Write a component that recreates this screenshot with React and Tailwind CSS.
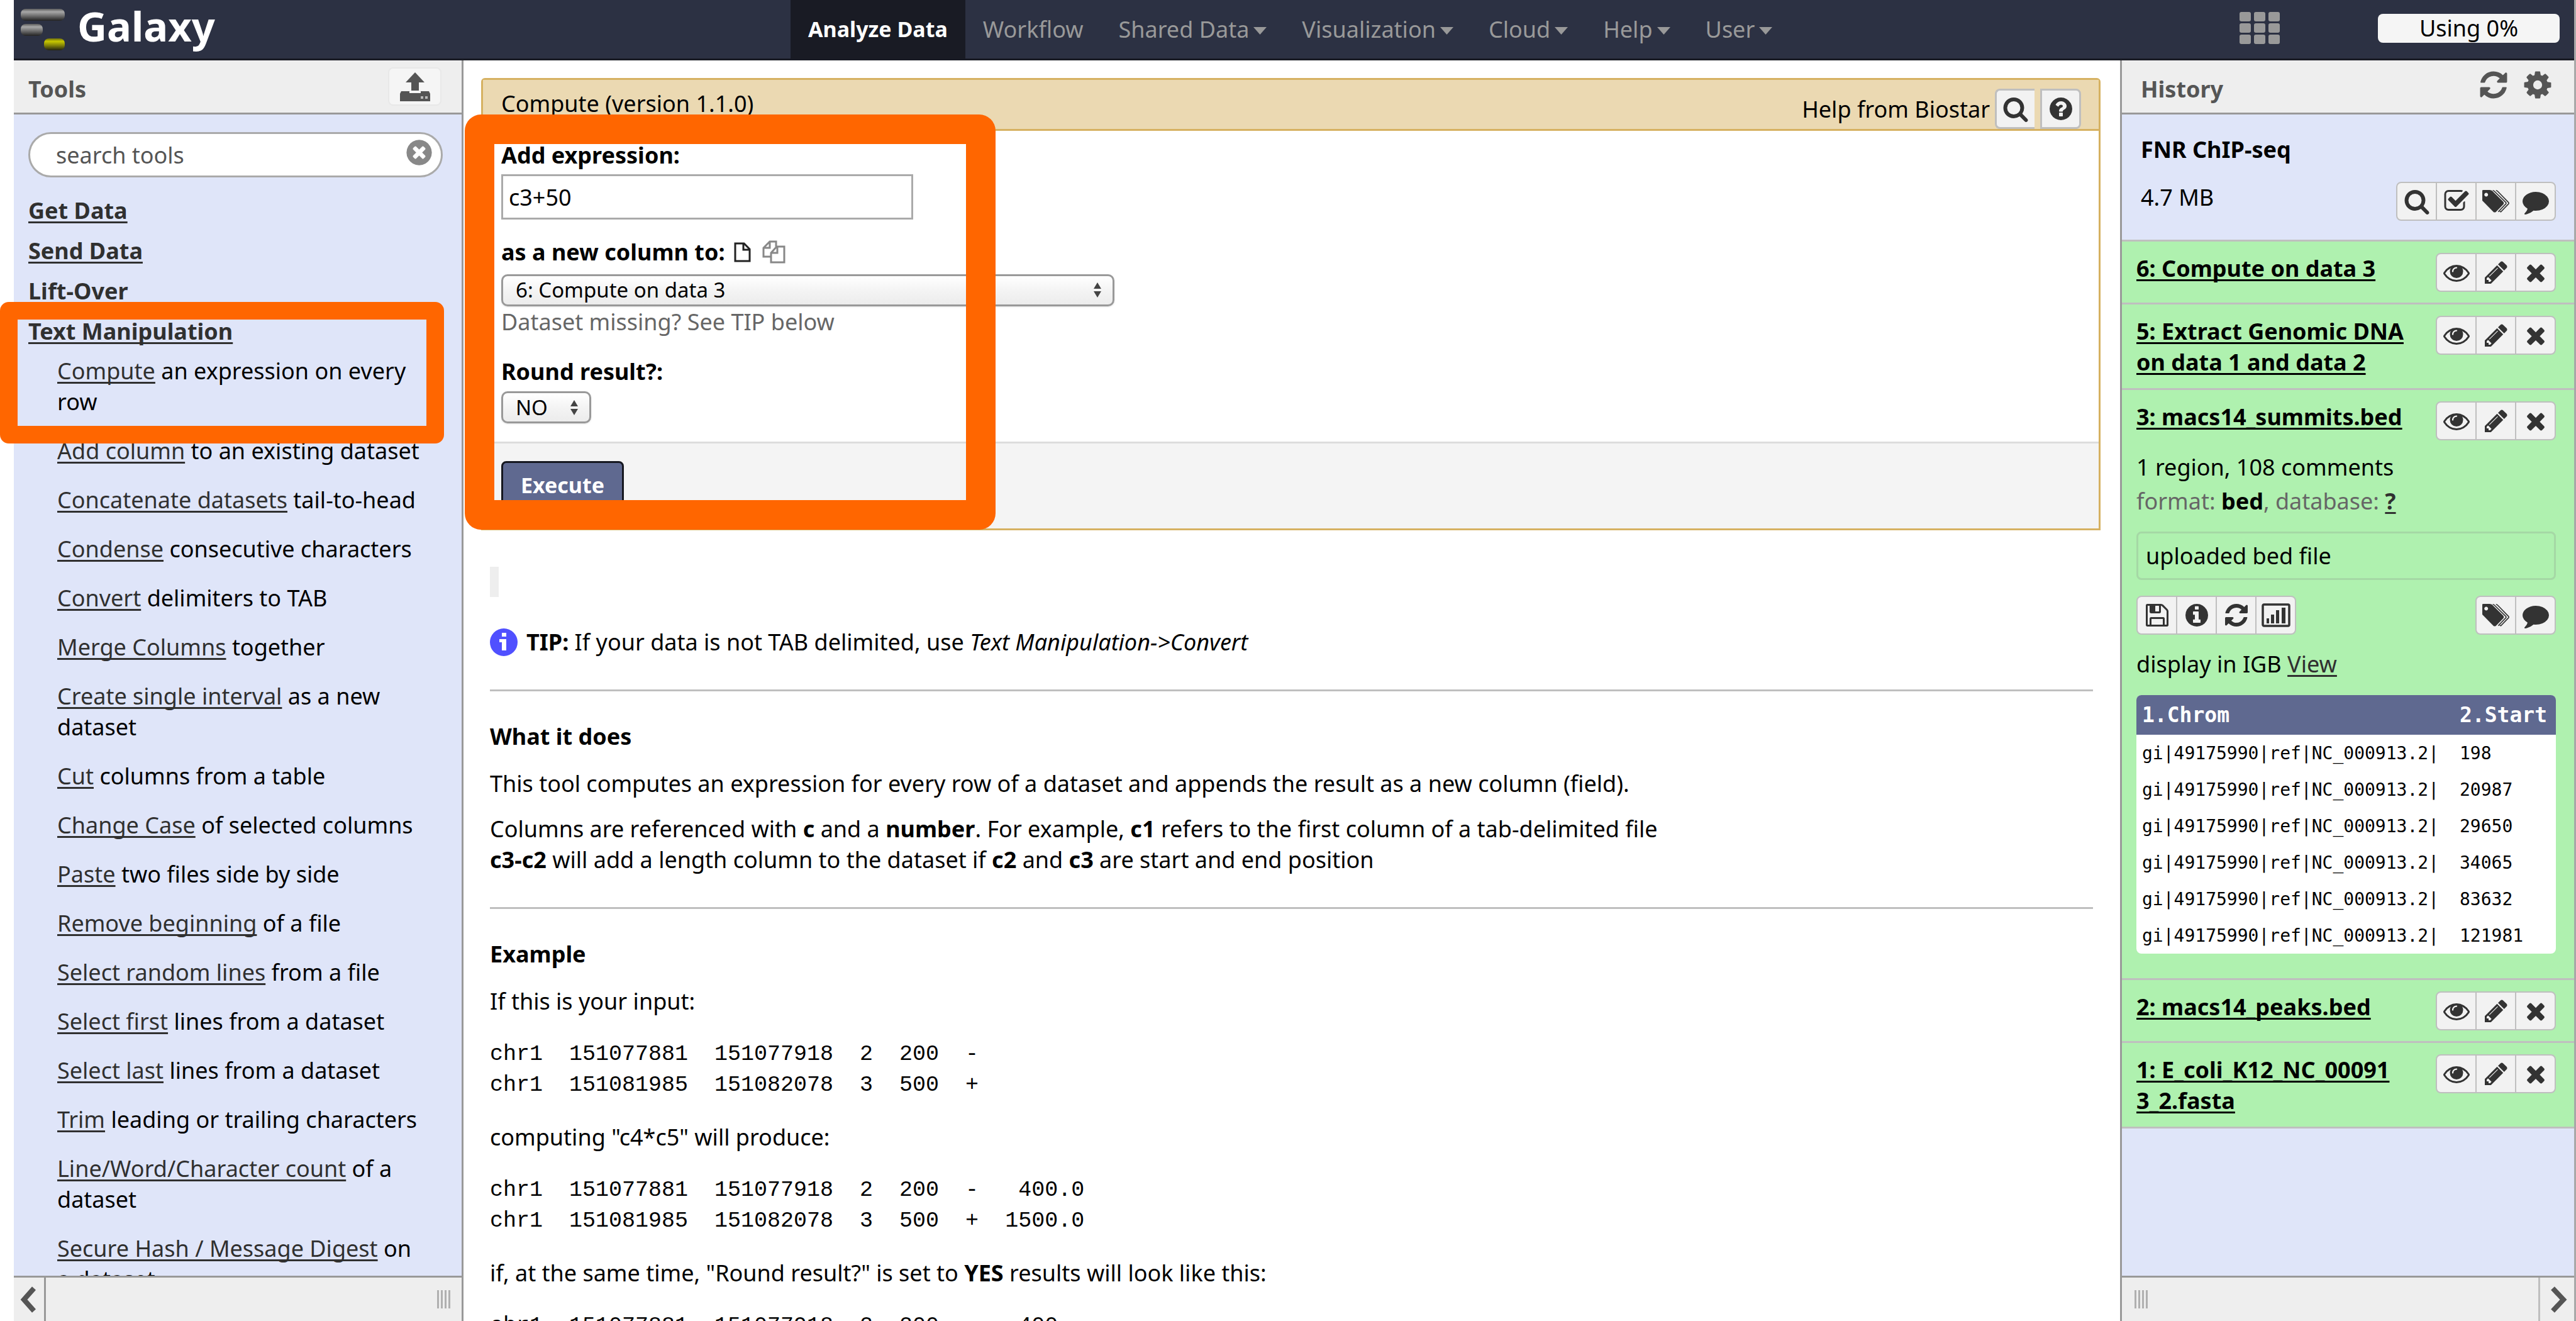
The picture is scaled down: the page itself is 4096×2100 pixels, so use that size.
import React from 'react';

const DISC =
  'm0 0q0 209-103 385.5t-279.5 279.5-385.5 103-385.5-103-279.5-279.5-103-385.5 103-385.5 279.5-279.5 385.5-103 385.5 103 279.5 279.5 103 385.5z';

const PATHS = {
  search:
    'M1216 832q0-185-131.5-316.5t-316.5-131.5-316.5 131.5-131.5 316.5 131.5 316.5 316.5 131.5 316.5-131.5 131.5-316.5zm512 832q0 52-38 90t-90 38q-54 0-90-38l-343-342q-179 124-399 124-143 0-273.5-55.5t-225-150-150-225-55.5-273.5 55.5-273.5 150-225 225-150 273.5-55.5 273.5 55.5 225 150 150 225 55.5 273.5q0 220-124 399l343 343q37 37 37 90z',
  check:
    'M1472 930v318q0 119-84.5 203.5t-203.5 84.5h-832q-119 0-203.5-84.5t-84.5-203.5v-832q0-119 84.5-203.5t203.5-84.5h832q63 0 117 25 15 7 18 23 3 17-9 29l-49 49q-10 10-23 10-3 0-9-2-23-6-45-6h-832q-66 0-113 47t-47 113v832q0 66 47 113t113 47h832q66 0 113-47t47-113v-254q0-13 9-22l64-64q10-10 23-10 6 0 12 3 20 8 20 29zm231-489l-814 814q-24 24-57 24t-57-24l-430-430q-24-24-24-57t24-57l110-110q24-24 57-24t57 24l263 263 647-647q24-24 57-24t57 24l110 110q24 24 24 57t-24 57z',
  gear:
    'M1152 896q0-106-75-181t-181-75-181 75-75 181 75 181 181 75 181-75 75-181zm512-109v222q0 12-8 23t-20 13l-185 28q-19 54-39 91 35 50 107 138 10 12 10 25t-9 23q-27 37-99 108t-94 71q-12 0-26-9l-138-108q-44 23-91 38-16 136-29 186-7 28-36 28h-222q-14 0-24.5-8.5t-11.5-21.5l-28-184q-49-16-90-37l-141 107q-10 9-25 9-14 0-25-11-126-114-165-168-7-10-7-23 0-12 8-23 15-21 51-66.5t54-70.5q-27-50-41-99l-183-27q-13-2-21-12.5t-8-23.5v-222q0-12 8-23t19-13l186-28q14-46 39-92-40-57-107-138-10-12-10-24 0-10 9-23 26-36 98.5-107.5t94.5-71.5q13 0 26 10l138 107q44-23 91-38 16-136 29-186 7-28 36-28h222q14 0 24.5 8.5t11.5 21.5l28 184q49 16 90 37l142-107q9-9 24-9 13 0 25 10 129 119 165 170 7 8 7 22 0 12-8 23-15 21-51 66.5t-54 70.5q26 50 41 98l183 28q13 2 21 12.5t8 23.5z',
  refresh:
    'M1639 1056q0 5-1 7-64 268-268 434.5t-478 166.5q-146 0-282.5-55t-243.5-157l-129 129q-19 19-45 19t-45-19-19-45v-448q0-26 19-45t45-19h448q26 0 45 19t19 45-19 45l-137 137q71 66 161 102t187 36q134 0 250-65t186-179q11-17 53-117 8-23 30-23h192q13 0 22.5 9.5t9.5 22.5zm25-800v448q0 26-19 45t-45 19h-448q-26 0-45-19t-19-45 19-45l138-138q-148-137-349-137-134 0-250 65t-186 179q-11 17-53 117-8 23-30 23h-199q-13 0-22.5-9.5t-9.5-22.5v-7q65-268 270-434.5t480-166.5q146 0 284 55.5t245 156.5l130-129q19-19 45-19t45 19 19 45z',
  eye:
    'M1664 960q-152-236-381-353 61 104 61 225 0 185-131.5 316.5t-316.5 131.5-316.5-131.5-131.5-316.5q0-121 61-225-229 117-381 353 133 205 333.5 326.5t434.5 121.5 434.5-121.5 333.5-326.5zm-720-384q0-20-14-34t-34-14q-125 0-214.5 89.5t-89.5 214.5q0 20 14 34t34 14 34-14 14-34q0-86 61-147t147-61q20 0 34-14t14-34zm848 384q0 34-20 69-140 230-376.5 368.5t-499.5 138.5-499.5-139-376.5-368q-20-35-20-69t20-69q140-229 376.5-368t499.5-139 499.5 139 376.5 368q20 35 20 69z',
  pencil:
    'M491 1536l91-91-235-235-91 91v107h128v128h107zm523-928q0-22-22-22-10 0-17 7l-542 542q-7 7-7 17 0 22 22 22 10 0 17-7l542-542q7-7 7-17zm-54-192l416 416-832 832h-416v-416zm683 96q0 53-37 90l-166 166-416-416 166-165q36-38 90-38 53 0 91 38l235 234q37 39 37 91z',
  times:
    'M1490 1322q0 40-28 68l-136 136q-28 28-68 28t-68-28l-294-294-294 294q-28 28-68 28t-68-28l-136-136q-28-28-28-68t28-68l294-294-294-294q-28-28-28-68t28-68l136-136q28-28 68-28t68 28l294 294 294-294q28-28 68-28t68 28l136 136q28 28 28 68t-28 68l-294 294 294 294q28 28 28 68z',
  comment:
    'M1792 896q0 174-120 321.5t-326 233-450 85.5q-70 0-145-8-198 175-460 242-49 14-114 22-17 2-30.5-9t-17.5-29v-1q-3-4-.5-12t2-10 4.5-9.5l6-9 7-8.5 8-9q7-8 31-34.5t34.5-38 31-39.5 32.5-51 27-59 26-76q-157-89-247.5-220t-90.5-281q0-130 71-248.5t191-204.5 286-136.5 348-50.5q244 0 450 85.5t326 233 120 321.5z',
  save:
    'M512 1536h768v-384h-768v384zm896 0h128v-896q0-14-10-38.5t-20-34.5l-281-281q-10-10-34-20t-39-10v416q0 40-28 68t-68 28h-576q-40 0-68-28t-28-68v-416h-128v1280h128v-416q0-40 28-68t68-28h832q40 0 68 28t28 68v416zm-384-928v-320q0-13-9.5-22.5t-22.5-9.5h-192q-13 0-22.5 9.5t-9.5 22.5v320q0 13 9.5 22.5t22.5 9.5h192q13 0 22.5-9.5t9.5-22.5zm640 32v928q0 40-28 68t-68 28h-1344q-40 0-68-28t-28-68v-1344q0-40 28-68t68-28h928q40 0 88 20t76 48l280 280q28 28 48 76t20 88z',
  info:
    'M1152 1376v-160q0-14-9-23t-23-9h-96v-512q0-14-9-23t-23-9h-320q-14 0-23 9t-9 23v160q0 14 9 23t23 9h96v320h-96q-14 0-23 9t-9 23v160q0 14 9 23t23 9h448q14 0 23-9t9-23zm-128-896v-160q0-14-9-23t-23-9h-192q-14 0-23 9t-9 23v160q0 14 9 23t23 9h192q14 0 23-9t9-23zm640 416' + DISC,
  question:
    'M1024 1376v-192q0-14-9-23t-23-9h-192q-14 0-23 9t-9 23v192q0 14 9 23t23 9h192q14 0 23-9t9-23zm256-672q0-88-55.5-163t-138.5-116-170-41q-243 0-371 213-15 24 8 42l132 100q7 6 19 6 16 0 25-12 53-68 86-92 34-24 86-24 48 0 85.5 26t37.5 59q0 38-20 61t-68 45q-63 28-115.5 86.5t-52.5 125.5v36q0 14 9 23t23 9h192q14 0 23-9t9-23q0-19 21.5-49.5t54.5-49.5q32-18 49-28.5t46-35 44.5-48 28-60.5 12.5-81zm384 192' + DISC,
  clear:
    'M1277 1122q0-26-19-45l-181-181 181-181q19-19 19-45 0-27-19-46l-90-90q-19-19-46-19-26 0-45 19l-181 181-181-181q-19-19-45-19-27 0-46 19l-90 90q-19 19-19 46 0 26 19 45l181 181-181 181q-19 19-19 45 0 27 19 46l90 90q19 19 46 19 26 0 45-19l181-181 181 181q19 19 45 19 27 0 46-19l90-90q19-19 19-46zm387-226' + DISC,
};

function Icon({ name, className = 'size-[42px]' }) {
  if (name === 'tags') {
    return (
      <svg viewBox="0 0 1860 1792" className="h-[42px] w-[44px]" fill="currentColor" aria-hidden="true">
        <path d="M384 448q0-53-37.5-90.5t-90.5-37.5-90.5 37.5-37.5 90.5 37.5 90.5 90.5 37.5 90.5-37.5 37.5-90.5zm1067 576q0 53-37 90l-491 492q-39 37-91 37-53 0-90-37l-715-716q-38-37-64.5-101t-26.5-117v-416q0-52 38-90t90-38h416q53 0 117 26.5t102 64.5l715 714q37 39 37 91z" />
        <path
          d="M700 160q60 5 110 55l780 760q45 49 0 98l-520 540M920 160q60 5 110 55l740 760q45 49 0 98l-520 540l-80-30"
          fill="none"
          stroke="currentColor"
          strokeWidth="70"
        />
      </svg>
    );
  }
  if (name === 'chart') {
    return (
      <svg viewBox="0 0 46 38" className="h-[38px] w-[46px]" aria-hidden="true">
        <rect x="2" y="2" width="42" height="34" rx="2" fill="none" stroke="currentColor" strokeWidth="3.5" />
        <path d="M8 24h4v8h-4zM15 18h5v14h-5zM23 11h5v21h-5zM32 7h6v25h-6z" fill="currentColor" />
      </svg>
    );
  }
  return (
    <svg viewBox="0 0 1792 1792" className={className} fill="currentColor" aria-hidden="true">
      <path d={PATHS[name]} />
    </svg>
  );
}

function IconGroup({ items }) {
  return (
    <div className="flex shrink-0">
      {items.map(([name, label]) => (
        <button
          key={name}
          type="button"
          aria-label={label}
          className="-ml-[2px] flex h-[62px] w-[65px] items-center justify-center border-2 border-[#bfbfbf] bg-[#f2f2f2] text-[#333] first:ml-0 first:rounded-l-lg last:rounded-r-lg"
        >
          <Icon name={name} />
        </button>
      ))}
    </div>
  );
}

function Logo() {
  return (
    <svg viewBox="0 0 70 68" className="h-[68px] w-[70px]" aria-hidden="true">
      <defs>
        <linearGradient id="grey" x1="0" y1="0" x2="0" y2="1">
          <stop offset="0" stopColor="#5c5c5c" />
          <stop offset="0.25" stopColor="#a8a8a8" />
          <stop offset="0.6" stopColor="#6c6c6c" />
          <stop offset="1" stopColor="#222" />
        </linearGradient>
        <linearGradient id="gold" x1="0" y1="0" x2="0" y2="1">
          <stop offset="0" stopColor="#6a6a10" />
          <stop offset="0.25" stopColor="#c8c800" />
          <stop offset="0.6" stopColor="#808008" />
          <stop offset="1" stopColor="#222210" />
        </linearGradient>
      </defs>
      <rect x="0" y="1" width="70" height="19" rx="8" fill="url(#grey)" />
      <rect x="0" y="25" width="35" height="19" rx="8" fill="url(#grey)" />
      <rect x="37" y="48" width="33" height="19" rx="8" fill="url(#gold)" />
    </svg>
  );
}

function Caret() {
  return (
    <svg viewBox="0 0 21 12" className="ml-[7px] mt-1 h-[12px] w-[21px]" fill="currentColor" aria-hidden="true">
      <path d="M0 0h21L10.500 12z" />
    </svg>
  );
}

const NAV = [
  ['Workflow', false],
  ['Shared Data', true],
  ['Visualization', true],
  ['Cloud', true],
  ['Help', true],
  ['User', true],
];

function Masthead() {
  return (
    <header className="flex h-[96px] shrink-0 items-stretch border-b-[3px] border-[#191b24] bg-[#2c3143]">
      <a href="#home" className="flex w-[1235px] shrink-0 items-center pl-[11px] text-[65px] leading-[82px] font-bold text-white">
        <Logo />
        <span className="ml-[20px] pb-[11px]">Galaxy</span>
      </a>
      <nav className="flex text-[36px] text-[#999]">
        <a href="#analyze" className="flex items-center bg-[#191b24] px-[28px] text-[34px] font-bold text-white">
          Analyze Data
        </a>
        {NAV.map(([label, menu]) => (
          <a key={label} href="#menu" className="flex items-center px-[28px]">
            {label}
            {menu && <Caret />}
          </a>
        ))}
      </nav>
      <div className="mr-[23px] ml-auto flex items-center gap-[156px] pb-1">
        <svg viewBox="0 0 64 52" className="h-[52px] w-[64px]" fill="#999" aria-label="Scratchbook">
          {[0, 18, 36].map((y) =>
            [0, 23, 46].map((x) => <rect key={x + '-' + y} x={x} y={y} width="18" height="15" rx="3" />)
          )}
        </svg>
        <div className="h-[46px] w-[289px] rounded-lg bg-[#f5f5f5] text-center text-[36px] leading-[46px] text-black">Using 0%</div>
      </div>
    </header>
  );
}

const LINK = 'text-[#303030] underline decoration-[3px] underline-offset-[4px] [text-decoration-skip-ink:none]';

const TOOLS = [
  ['Compute', 'an expression on every row'],
  ['Add column', 'to an existing dataset'],
  ['Concatenate datasets', 'tail-to-head'],
  ['Condense', 'consecutive characters'],
  ['Convert', 'delimiters to TAB'],
  ['Merge Columns', 'together'],
  ['Create single interval', 'as a new dataset'],
  ['Cut', 'columns from a table'],
  ['Change Case', 'of selected columns'],
  ['Paste', 'two files side by side'],
  ['Remove beginning', 'of a file'],
  ['Select random lines', 'from a file'],
  ['Select first', 'lines from a dataset'],
  ['Select last', 'lines from a dataset'],
  ['Trim', 'leading or trailing characters'],
  ['Line/Word/Character count', 'of a dataset'],
  ['Secure Hash / Message Digest', 'on a dataset'],
];

function Grip() {
  return (
    <div className="flex h-[29px] gap-[3px]">
      {[0, 1, 2, 3].map((i) => (
        <span key={i} className="w-[3px] bg-[#b0b0b0]" />
      ))}
    </div>
  );
}

function Chevron({ d }) {
  return (
    <svg viewBox="0 0 26 42" className="h-[42px] w-[26px]" fill="none" stroke="#555" strokeWidth="8" aria-hidden="true">
      <path d={d} />
    </svg>
  );
}

function ToolPanel() {
  return (
    <aside className="flex w-[715px] shrink-0 flex-col border-r-[3px] border-[#999] bg-[#dfe5f9]">
      <div className="flex h-[86px] shrink-0 items-center justify-between border-b-[3px] border-[#999] bg-[#eee] pr-[32px] pl-[23px]">
        <h2 className="pt-2 font-bold text-[#555]">Tools</h2>
        <button type="button" aria-label="Upload" className="flex h-[61px] w-[85px] items-center justify-center rounded-lg border-2 border-[#e8e8e8] bg-[#f5f5f5]">
          <svg viewBox="0 0 48 46" className="h-[46px] w-[48px]" fill="#555" aria-hidden="true">
            <path d="M24 0L39 16H30V29H18V16H9z" />
            <path d="M2 30H15V33H33V30H46L48 34V46H0V34z" />
            <path d="M33 38h4v4h-4zM40 38h4v4h-4z" fill="#bbb" />
          </svg>
        </button>
      </div>
      <div className="min-h-0 flex-1 overflow-hidden pt-[28px] pl-[23px]">
        <div className="mr-[30px] flex h-[72px] items-center rounded-full border-[3px] border-[#aaa] bg-white pr-[11px] pl-[41px]">
          <input aria-label="search tools" placeholder="search tools" className="min-w-0 flex-1 text-[36px] placeholder:text-[#555] outline-none" />
          <button type="button" aria-label="Clear search" className="-mt-[8px] text-[#888]">
            <Icon name="clear" className="size-[47px]" />
          </button>
        </div>
        <div className="mt-[28px] flex flex-col items-start gap-[15px] font-bold">
          {['Get Data', 'Send Data', 'Lift-Over', 'Text Manipulation'].map((s) => (
            <a key={s} href="#section" className={LINK}>
              {s}
            </a>
          ))}
        </div>
        <ul className="mt-[14px] mr-[52px] ml-[46px] flex flex-col gap-[29px]">
          {TOOLS.map(([name, rest]) => (
            <li key={name}>
              <a href="#tool" className={LINK}>
                {name}
              </a>{' '}
              {rest}
            </li>
          ))}
        </ul>
      </div>
      <div className="flex h-[72px] shrink-0 items-center border-t-[3px] border-[#999] bg-[#eee]">
        <button type="button" aria-label="Collapse tools" className="flex h-full w-[51px] items-center border-r-[3px] border-[#999] pl-[9px]">
          <Chevron d="M23 3L7 21L23 39" />
        </button>
        <div className="mr-[18px] ml-auto">
          <Grip />
        </div>
      </div>
    </aside>
  );
}

function SelectBox({ id, option, className }) {
  return (
    <div className={'relative ' + className}>
      <select
        id={id}
        className="h-[51px] w-full appearance-none rounded-[10px] border-[3px] border-[#999] bg-linear-to-b from-white via-[#f4f4f4] to-[#ececec] pl-[20px] text-[33px] leading-[44px] text-black shadow-sm"
      >
        <option>{option}</option>
      </select>
      <svg viewBox="0 0 12 24" className="pointer-events-none absolute top-[14px] right-[21px] h-[24px] w-[12px]" fill="#444" aria-hidden="true">
        <path d="M6 0L12 10H0zM0 14H12L6 24z" />
      </svg>
    </div>
  );
}

function ToolForm() {
  return (
    <form className="rounded-t-md border-[3px] border-[#d6b161]" onSubmit={(e) => e.preventDefault()}>
      <div className="flex h-[81px] items-start justify-between border-b-[3px] border-[#d6b161] bg-[#ebd9b2] pl-[29px]">
        <div className="pt-[13px]">Compute (version 1.1.0)</div>
        <div className="flex items-center pt-[14px] pr-[28px]">
          <span className="mr-[8px]">Help from Biostar</span>
          <button type="button" aria-label="Search Biostar" className="flex h-[64px] w-[63px] items-center justify-center rounded-l-lg border-[3px] border-r-0 border-[#bfbfbf] bg-[#f2f2f2] text-[#333]">
            <Icon name="search" />
          </button>
          <button type="button" aria-label="Ask Biostar" className="ml-[9px] flex h-[64px] w-[65px] items-center justify-center rounded-r-lg border-[3px] border-[#bfbfbf] bg-[#f2f2f2] text-[#333]">
            <Icon name="question" />
          </button>
        </div>
      </div>
      <div className="px-[29px] pt-[14px] pb-[29px]">
        <label htmlFor="expr" className="block font-bold">
          Add expression:
        </label>
        <input id="expr" defaultValue="c3+50" className="mt-[6px] block h-[72px] w-[655px] border-[3px] border-[#aaa] bg-white px-[9px] text-[36px]" />
        <div className="mt-[27px] flex items-center">
          <label htmlFor="dataset" className="font-bold">
            as a new column to:
          </label>
          <svg viewBox="0 0 27 32" className="ml-[14px] h-[32px] w-[27px]" fill="none" stroke="#222" strokeWidth="3" aria-hidden="true">
            <path d="M2 2H16L25 11V30H2zM15 2V12H25" />
          </svg>
          <svg viewBox="0 0 37 37" className="ml-[18px] h-[37px] w-[37px]" fill="none" stroke="#888" strokeWidth="3" aria-hidden="true">
            <path d="M14 26H2V12L12 2H22V10M12 2V12H2" />
            <path d="M14 20L23 10H35V35H14zM24 10V20H14" />
          </svg>
        </div>
        <SelectBox id="dataset" option="6: Compute on data 3" className="mt-[10px] w-[975px]" />
        <div className="text-[#666]">Dataset missing? See TIP below</div>
        <label htmlFor="round" className="mt-[30px] block font-bold">
          Round result?:
        </label>
        <SelectBox id="round" option="NO" className="mt-[7px] w-[143px]" />
      </div>
      <div className="border-t-[3px] border-[#ddd] bg-[#f4f4f4] px-[29px] pt-[28px] pb-[31px]">
        <button type="submit" className="h-[76px] rounded-lg border-[3px] border-[#15171f] bg-[#5f6990] px-[28px] text-[34px] font-bold text-white">
          Execute
        </button>
      </div>
    </form>
  );
}

const PRE = 'font-["Liberation_Mono",monospace] text-[35px]';
const RULE = 'mt-[51px] mb-[47px] border-t-[3px] border-[#bfbfbf]';

const INPUT_ROWS = `chr1  151077881  151077918  2  200  -
chr1  151081985  151082078  3  500  +`;
const FLOAT_ROWS = `chr1  151077881  151077918  2  200  -   400.0
chr1  151081985  151082078  3  500  +  1500.0`;
const ROUND_ROWS = `chr1  151077881  151077918  2  200  -   400
chr1  151081985  151082078  3  500  +  1500`;

function Center() {
  return (
    <main className="min-w-0 flex-1 overflow-hidden bg-white pt-[28px] pr-[31px] pl-[28px]">
      <ToolForm />
      <div className="pr-[12px] pl-[14px]">
        <div className="mt-[58px] h-[48px] w-[14px] bg-[#eee]" />
        <p className="mt-[47px] flex items-center">
          <svg viewBox="0 0 44 44" className="mr-[14px] size-[44px]" aria-hidden="true">
            <circle cx="22" cy="22" r="22" fill="#5050ff" />
            <path d="M19 7h7v6h-7zM15 17h11v18h-7v-13h-4z" fill="#fff" />
          </svg>
          <span>
            <b>TIP:</b> If your data is not TAB delimited, use <i>Text Manipulation-&gt;Convert</i>
          </span>
        </p>
        <hr className={RULE} />
        <p className="font-bold">What it does</p>
        <p className="mt-[26px]">This tool computes an expression for every row of a dataset and appends the result as a new column (field).</p>
        <p className="mt-[23px]">
          Columns are referenced with <b>c</b> and a <b>number</b>. For example, <b>c1</b> refers to the first column of a tab-delimited file
          <br />
          <b>c3-c2</b> will add a length column to the dataset if <b>c2</b> and <b>c3</b> are start and end position
        </p>
        <hr className={RULE} />
        <p className="font-bold">Example</p>
        <p className="mt-[26px]">If this is your input:</p>
        <pre className={'mt-[36px] ' + PRE}>{INPUT_ROWS}</pre>
        <p className="mt-[33px]">computing "c4*c5" will produce:</p>
        <pre className={'mt-[36px] ' + PRE}>{FLOAT_ROWS}</pre>
        <p className="mt-[33px]">
          if, at the same time, "Round result?" is set to <b>YES</b> results will look like this:
        </p>
        <pre className={'mt-[36px] ' + PRE}>{ROUND_ROWS}</pre>
      </div>
    </main>
  );
}

const ACTIONS = [
  ['eye', 'View data'],
  ['pencil', 'Edit attributes'],
  ['times', 'Delete'],
];
const TITLE = 'font-bold text-black underline decoration-[3px] underline-offset-[4px] [text-decoration-skip-ink:none]';

function Dataset({ title, children }) {
  return (
    <section className="border-b-[3px] border-[#bfbfbf] bg-[#aff1af] pt-[18px] pr-[29px] pb-[17px] pl-[23px]">
      <div className="flex items-start justify-between">
        <a href="#dataset" className={TITLE}>
          {title}
        </a>
        <IconGroup items={ACTIONS} />
      </div>
      {children}
    </section>
  );
}

const STARTS = ['198', '20987', '29650', '34065', '83632', '121981'];

function HistoryPanel() {
  return (
    <aside className="flex w-[722px] shrink-0 flex-col border-l-[3px] border-[#999] bg-[#dfe5f9]">
      <div className="flex h-[86px] shrink-0 items-center border-b-[3px] border-[#999] bg-[#eee] pr-[33px] pl-[30px] text-[#555]">
        <h2 className="mr-auto pt-2 font-bold">History</h2>
        <button type="button" aria-label="Refresh history" className="mr-[20px] pb-[6px]">
          <Icon name="refresh" className="size-[50px]" />
        </button>
        <button type="button" aria-label="History options" className="pb-[6px]">
          <Icon name="gear" className="size-[50px]" />
        </button>
      </div>
      <div className="min-h-0 flex-1 overflow-hidden">
        <div className="border-b-[3px] border-[#bfbfbf] pt-[31px] pr-[29px] pb-[30px] pl-[30px]">
          <div className="font-bold">FNR ChIP-seq</div>
          <div className="mt-[27px] flex items-start justify-between">
            <span>4.7 MB</span>
            <IconGroup
              items={[
                ['search', 'Search datasets'],
                ['check', 'Select datasets'],
                ['tags', 'Edit tags'],
                ['comment', 'Edit annotation'],
              ]}
            />
          </div>
        </div>
        <Dataset title="6: Compute on data 3" />
        <Dataset
          title={
            <>
              5: Extract Genomic DNA <br />
              on data 1 and data 2
            </>
          }
        />
        <Dataset title="3: macs14_summits.bed">
          <div className="mt-[18px]">1 region, 108 comments</div>
          <div className="mt-[5px] text-[#666]">
            format: <b className="text-black">bed</b>, database:{' '}
            <a href="#db" className={LINK + ' font-bold'}>
              ?
            </a>
          </div>
          <div className="mt-[24px] flex h-[77px] items-center rounded-lg border-[3px] border-[#a5d8a5] px-[12px]">uploaded bed file</div>
          <div className="mt-[25px] flex justify-between">
            <IconGroup
              items={[
                ['save', 'Download'],
                ['info', 'View details'],
                ['refresh', 'Run again'],
                ['chart', 'Visualize'],
              ]}
            />
            <IconGroup
              items={[
                ['tags', 'Edit dataset tags'],
                ['comment', 'Edit dataset annotation'],
              ]}
            />
          </div>
          <div className="mt-[22px]">
            display in IGB{' '}
            <a href="#view" className={LINK}>
              View
            </a>
          </div>
          <div className="mt-[25px] mb-[22px] overflow-hidden rounded-lg bg-white">
            <table className='w-full table-fixed font-["DejaVu_Sans_Mono",monospace] text-[28px]'>
              <thead>
                <tr className="h-[63px] bg-[#5f6990] text-left text-[33px] text-white">
                  <th className="w-[514px] p-0 pl-[9px]">1.Chrom</th>
                  <th className="p-0">2.Start</th>
                </tr>
              </thead>
              <tbody>
                {STARTS.map((s) => (
                  <tr key={s} className="h-[58px]">
                    <td className="p-0 pl-[9px]">gi|49175990|ref|NC_000913.2|</td>
                    <td className="p-0">{s}</td>
                  </tr>
                ))}
              </tbody>
            </table>
          </div>
        </Dataset>
        <Dataset title="2: macs14_peaks.bed" />
        <Dataset
          title={
            <>
              1: E_coli_K12_NC_00091
              <br />
              3_2.fasta
            </>
          }
        />
      </div>
      <div className="flex h-[72px] shrink-0 items-center border-t-[3px] border-[#999] bg-[#eee] pl-[20px]">
        <Grip />
        <button type="button" aria-label="Collapse history" className="ml-auto flex h-full w-[57px] items-center border-l-[3px] border-[#bfbfbf] pl-[17px]">
          <Chevron d="M3 3L20 21L3 39" />
        </button>
      </div>
    </aside>
  );
}

export default function App() {
  return (
    <div className='relative flex h-screen flex-col overflow-hidden border-r-[3px] border-[#a8a8a8] bg-white pl-[22px] font-["Noto_Sans",sans-serif] text-[36px] leading-[49px] text-black'>
      <Masthead />
      <div className="flex min-h-0 flex-1">
        <ToolPanel />
        <Center />
        <HistoryPanel />
      </div>
      <div className="pointer-events-none absolute top-[480px] left-0 h-[225px] w-[706px] rounded-[14px] border-[28px] border-[#ff6600]" />
      <div className="pointer-events-none absolute top-[182px] left-[739px] h-[660px] w-[844px] rounded-[26px] border-[47px] border-[#ff6600]" />
    </div>
  );
}
